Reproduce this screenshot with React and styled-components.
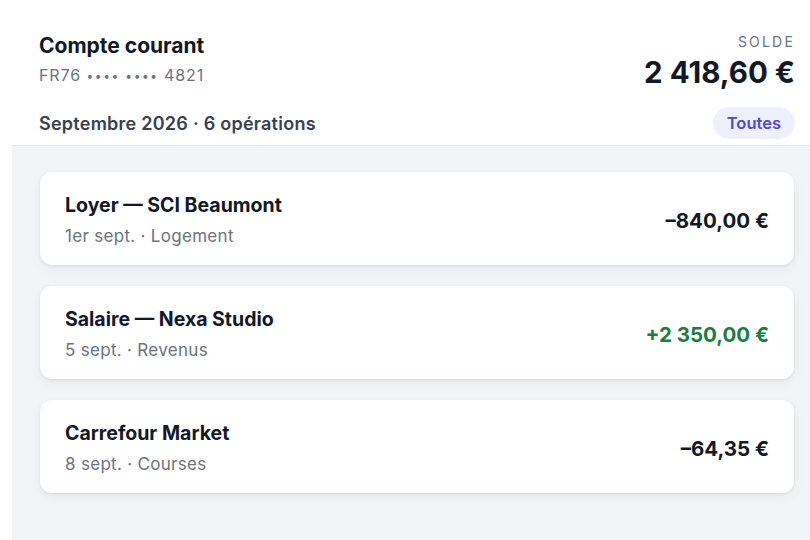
import React from "react";
import styled, { createGlobalStyle } from "styled-components";

const Global = createGlobalStyle`
  html, body { margin: 0; padding: 0; background: #ffffff; overflow: hidden; }
  body { font-family: Inter, "Noto Sans", "Liberation Sans", sans-serif; -webkit-font-smoothing: antialiased; }
`;

const Page = styled.div`
  margin-left: 12px;
  width: 810px;
  min-height: 540px;
  display: flex;
  flex-direction: column;
  background: #ffffff;
`;

const Header = styled.header`
  padding: 32px 27px 6px 27px;
  border-bottom: 1px solid #e5e7eb;
  display: flex;
  flex-direction: column;
  gap: 18px;
`;

const TopRow = styled.div`
  display: flex;
  justify-content: space-between;
  align-items: flex-start;
`;

const Block = styled.div`
  display: flex;
  flex-direction: column;
  align-items: ${(p) => (p.$right ? "flex-end" : "flex-start")};
`;

const AccountName = styled.div`
  font-size: 21px;
  line-height: 28px;
  font-weight: 700;
  color: #111827;
`;

const Iban = styled.div`
  margin-top: 5px;
  font-size: 16px;
  line-height: 20px;
  color: #6b7280;
  letter-spacing: 0.9px;
`;

const Dots = styled.span`
  font-size: 12px;
  letter-spacing: 1.6px;
  vertical-align: 1px;
`;

const Label = styled.div`
  font-size: 14px;
  line-height: 20px;
  letter-spacing: 2.2px;
  color: #6b7280;
  text-transform: uppercase;
`;

const Balance = styled.div`
  margin-top: 3px;
  font-size: 29.5px;
  line-height: 34px;
  font-weight: 700;
  color: #111827;
`;

const FilterRow = styled.div`
  display: flex;
  justify-content: space-between;
  align-items: center;
`;

const Period = styled.div`
  font-size: 18px;
  font-weight: 600;
  letter-spacing: 0.25px;
  color: #374151;
`;

const Pill = styled.button`
  border: none;
  background: #eef0fe;
  color: #4f46e5;
  font-family: inherit;
  font-size: 16.5px;
  font-weight: 600;
  height: 32px;
  padding: 0 14px;
  border-radius: 16px;
`;

const List = styled.div`
  flex: 1;
  background: #f3f4f6;
  padding: 26px 28px;
  display: flex;
  flex-direction: column;
  gap: 21px;
`;

const Card = styled.div`
  background: #ffffff;
  border-radius: 12px;
  padding: 21px 25px 18px 25px;
  display: flex;
  justify-content: space-between;
  align-items: center;
  box-shadow: 0 1px 3px rgba(17, 24, 39, 0.08), 0 4px 12px rgba(17, 24, 39, 0.05);
`;

const Title = styled.div`
  font-size: 19.5px;
  line-height: 24px;
  font-weight: 650;
  color: #111827;
`;

const Meta = styled.div`
  margin-top: 8px;
  font-size: 17px;
  line-height: 22px;
  letter-spacing: 0.3px;
  color: #6b7280;
`;

const Amount = styled.div`
  font-size: 20.5px;
  font-weight: 700;
  color: ${(p) => (p.$positive ? "#17803d" : "#111827")};
`;

const ops = [
  { title: "Loyer — SCI Beaumont", meta: "1er sept. · Logement", amount: "–840,00 €" },
  { title: "Salaire — Nexa Studio", meta: "5 sept. · Revenus", amount: "+2 350,00 €", positive: true },
  { title: "Carrefour Market", meta: "8 sept. · Courses", amount: "–64,35 €" },
];

export default function App() {
  return (
    <>
      <Global />
      <Page>
        <Header>
          <TopRow>
            <Block>
              <AccountName>Compte courant</AccountName>
              <Iban>
                FR76 <Dots>••••</Dots> <Dots>••••</Dots> 4821
              </Iban>
            </Block>
            <Block $right>
              <Label>Solde</Label>
              <Balance>2 418,60 €</Balance>
            </Block>
          </TopRow>
          <FilterRow>
            <Period>Septembre 2026 · 6 opérations</Period>
            <Pill>Toutes</Pill>
          </FilterRow>
        </Header>
        <List>
          {ops.map((o) => (
            <Card key={o.title}>
              <div>
                <Title>{o.title}</Title>
                <Meta>{o.meta}</Meta>
              </div>
              <Amount $positive={o.positive}>{o.amount}</Amount>
            </Card>
          ))}
        </List>
      </Page>
    </>
  );
}
